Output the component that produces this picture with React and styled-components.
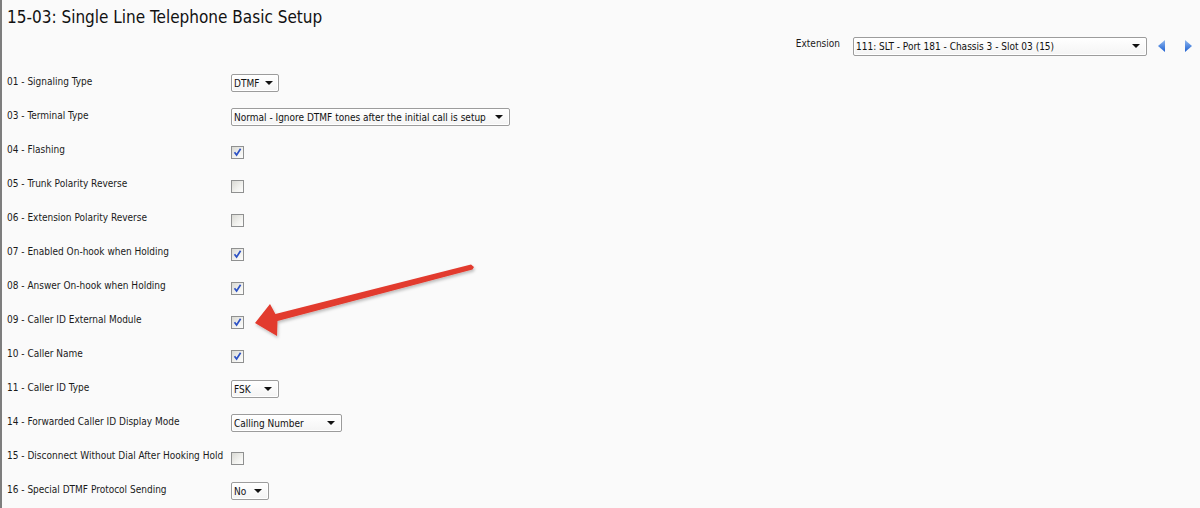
import styled, { createGlobalStyle } from "styled-components";

const GlobalStyle = createGlobalStyle`
  html, body {
    margin: 0;
    padding: 0;
    background: #fafafa;
  }
  * {
    box-sizing: border-box;
  }
`;

const Page = styled.div`
  position: relative;
  width: 1200px;
  height: 508px;
  overflow: hidden;
  border-left: 2px solid #7d7d7d;
  padding-left: 5px;
  font-family: "DejaVu Sans Condensed", "DejaVu Sans", sans-serif;
  font-stretch: condensed;
  color: #1a1a1a;
`;

const Title = styled.h1`
  margin: 6px 0 0;
  font-size: 17px;
  line-height: 22px;
  font-weight: normal;
  color: #111;
`;

const ExtensionBar = styled.div`
  display: flex;
  align-items: center;
  justify-content: flex-end;
  height: 20px;
  margin-top: 8px;
  padding-right: 8px;
`;

const ExtensionLabel = styled.span`
  font-size: 10px;
  margin-right: 13px;
  margin-top: -6px;
`;

const NavButton = styled.svg`
  width: 8px;
  height: 12px;
  margin-left: ${(p) => p.$gap}px;
  margin-top: 0;
`;

const Form = styled.div`
  margin-top: 8px;
`;

const Row = styled.div`
  display: grid;
  grid-template-columns: 224px auto;
  align-items: center;
  height: 34px;
`;

const Label = styled.span`
  font-size: 10px;
  white-space: nowrap;
`;

const Cell = styled.div`
  display: flex;
  align-items: center;
`;

const SelectBox = styled.div`
  display: flex;
  align-items: center;
  justify-content: space-between;
  flex-shrink: 0;
  width: ${(p) => p.$width}px;
  height: ${(p) => p.$height || 18}px;
  margin-top: ${(p) => p.$offset ?? 4}px;
  padding: 0 6px 0 2px;
  background: linear-gradient(#ffffff, #f4f4f4);
  border: 1px solid #9c9c9c;
  border-radius: 2px;
  box-shadow: inset 0 0 0 1px #ffffff;
  font-size: 10px;
  color: #111;
  white-space: nowrap;
  overflow: hidden;
`;

const Caret = styled.span`
  flex-shrink: 0;
  width: 0;
  height: 0;
  margin-left: 6px;
  border-left: 4px solid transparent;
  border-right: 4px solid transparent;
  border-top: 4px solid #111;
`;

const CheckBox = styled.div`
  display: flex;
  align-items: center;
  justify-content: center;
  width: 13px;
  height: 13px;
  margin-top: 7px;
  border: 1px solid #8f9090;
  background: linear-gradient(135deg, #d9d9d4 0%, #f2f2ef 60%, #fdfdfc 100%);
`;

const ArrowLayer = styled.svg`
  position: absolute;
  left: 0;
  top: 0;
  width: 1200px;
  height: 508px;
  pointer-events: none;
`;

const rows = [
  { label: "01 - Signaling Type", value: "DTMF", width: 48 },
  { label: "03 - Terminal Type", value: "Normal - Ignore DTMF tones after the initial call is setup", width: 279 },
  { label: "04 - Flashing", checked: true },
  { label: "05 - Trunk Polarity Reverse", checked: false },
  { label: "06 - Extension Polarity Reverse", checked: false },
  { label: "07 - Enabled On-hook when Holding", checked: true },
  { label: "08 - Answer On-hook when Holding", checked: true },
  { label: "09 - Caller ID External Module", checked: true },
  { label: "10 - Caller Name", checked: true },
  { label: "11 - Caller ID Type", value: "FSK", width: 48 },
  { label: "14 - Forwarded Caller ID Display Mode", value: "Calling Number", width: 111 },
  { label: "15 - Disconnect Without Dial After Hooking Hold", checked: false },
  { label: "16 - Special DTMF Protocol Sending", value: "No", width: 38 },
];

function Select({ value, width, height, offset }) {
  return (
    <SelectBox $width={width} $height={height} $offset={offset}>
      <span>{value}</span>
      <Caret />
    </SelectBox>
  );
}

function Check({ checked }) {
  return (
    <CheckBox>
      {checked && (
        <svg width="9" height="9" viewBox="0 0 9 9">
          <path d="M1.5 4.2 L3.6 7 L7.6 0.8" fill="none" stroke="#2d52c4" strokeWidth="1.7" />
        </svg>
      )}
    </CheckBox>
  );
}

function NavArrow({ dir, gap }) {
  const points = dir === "left" ? "7,0 7,12 0,6" : "1,0 1,12 8,6";
  return (
    <NavButton $gap={gap} viewBox="0 0 8 12">
      <defs>
        <linearGradient id={`nav-${dir}`} x1="0" y1="0" x2="0" y2="1">
          <stop offset="0" stopColor="#8fb8f0" />
          <stop offset="1" stopColor="#1c5fd0" />
        </linearGradient>
      </defs>
      <polygon points={points} fill={`url(#nav-${dir})`} />
    </NavButton>
  );
}

export default function App() {
  return (
    <>
      <GlobalStyle />
      <Page>
        <Title>15-03: Single Line Telephone Basic Setup</Title>
        <ExtensionBar>
          <ExtensionLabel>Extension</ExtensionLabel>
          <Select value="111: SLT - Port 181 - Chassis 3 - Slot 03 (15)" width={294} height={19} offset={0} />
          <NavArrow dir="left" gap={11} />
          <NavArrow dir="right" gap={18} />
        </ExtensionBar>
        <Form>
          {rows.map((row) => (
            <Row key={row.label}>
              <Label>{row.label}</Label>
              <Cell>
                {row.value ? <Select value={row.value} width={row.width} /> : <Check checked={row.checked} />}
              </Cell>
            </Row>
          ))}
        </Form>
        <ArrowLayer viewBox="0 0 1200 508">
          <defs>
            <filter id="shadow" x="-10%" y="-10%" width="120%" height="130%">
              <feDropShadow dx="1" dy="2" stdDeviation="1.5" floodColor="#000" floodOpacity="0.25" />
            </filter>
          </defs>
          <polygon
            points="253,323 268,304 273.4,314 469,264.5 472,267 470.5,269.5 275.5,321 275,336"
            fill="#e23a2e"
            filter="url(#shadow)"
          />
        </ArrowLayer>
      </Page>
    </>
  );
}
